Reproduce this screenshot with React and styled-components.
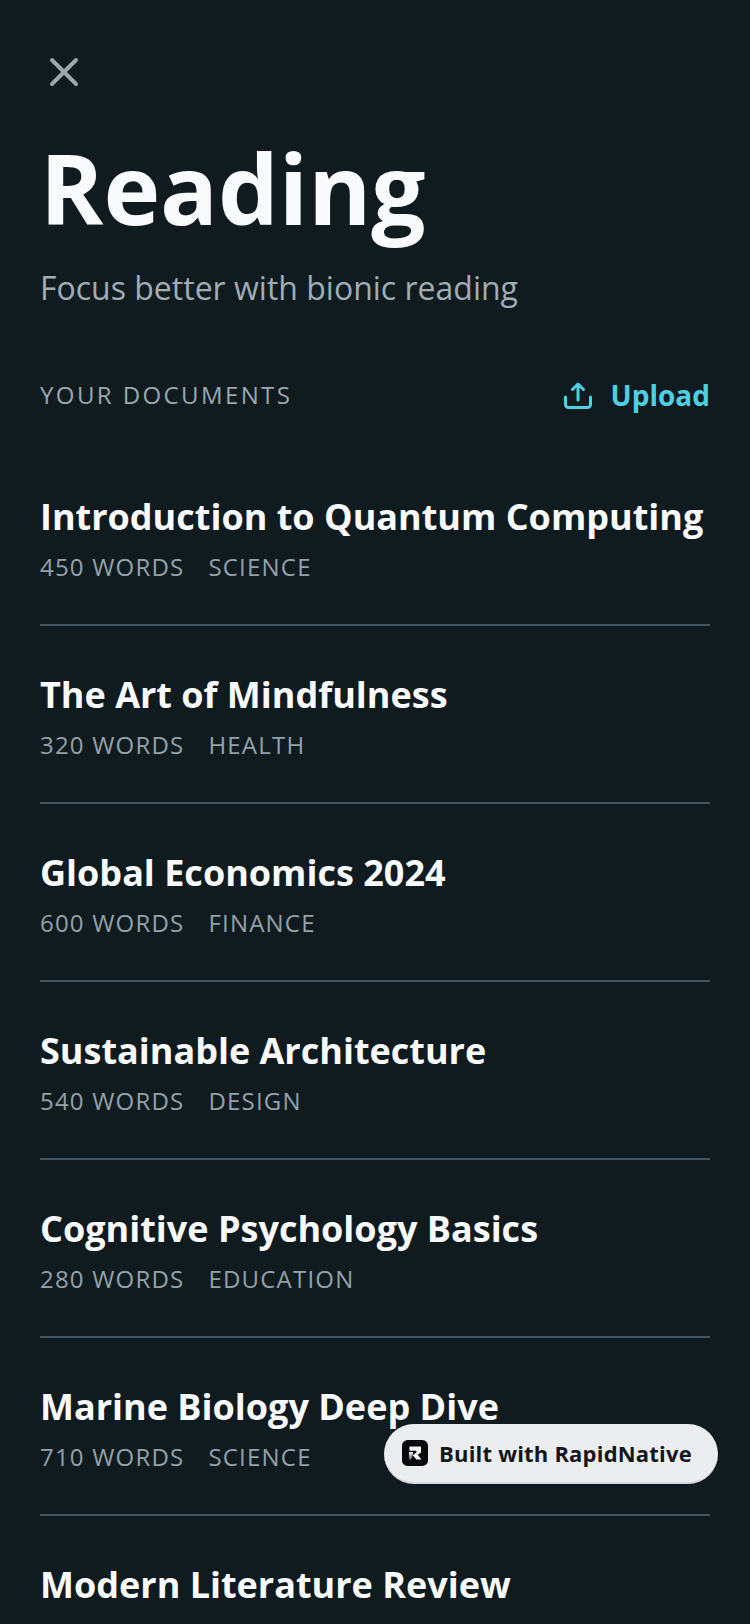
import React from 'react';
import styled, { createGlobalStyle } from 'styled-components';

const documents = [
  { title: 'Introduction to Quantum Computing', words: 450, tag: 'SCIENCE' },
  { title: 'The Art of Mindfulness', words: 320, tag: 'HEALTH' },
  { title: 'Global Economics 2024', words: 600, tag: 'FINANCE' },
  { title: 'Sustainable Architecture', words: 540, tag: 'DESIGN' },
  { title: 'Cognitive Psychology Basics', words: 280, tag: 'EDUCATION' },
  { title: 'Marine Biology Deep Dive', words: 710, tag: 'SCIENCE' },
  { title: 'Modern Literature Review' },
];

const App = () => (
  <Screen>
    <GlobalStyle />
    <CloseButton aria-label="Close">
      <svg width="40" height="40" viewBox="0 0 40 40" fill="none" stroke="#9aa7ae" strokeWidth="4" strokeLinecap="round">
        <path d="M8 8L32 32M32 8L8 32" />
      </svg>
    </CloseButton>
    <Heading>Reading</Heading>
    <Subtitle>Focus better with bionic reading</Subtitle>

    <SectionHeader>
      <SectionLabel>YOUR DOCUMENTS</SectionLabel>
      <UploadButton>
        <svg width="32" height="32" viewBox="0 0 32 32" fill="none" stroke="#4dd0e1" strokeWidth="3" strokeLinecap="round" strokeLinejoin="round">
          <path d="M15 21V5M9.500 10.500L15 5L20.500 10.500M2.500 18v7.500a3 3 0 0 0 3 3h19a3 3 0 0 0 3-3V18" />
        </svg>
        Upload
      </UploadButton>
    </SectionHeader>

    <List>
      {documents.map(doc => (
        <Row key={doc.title}>
          <RowTitle>{doc.title}</RowTitle>
          {doc.words && (
            <Meta>
              <span>{doc.words} WORDS</span>
              <span>{doc.tag}</span>
            </Meta>
          )}
        </Row>
      ))}
    </List>

    <Badge>
      <BadgeLogo>
        <svg width="26" height="26" viewBox="0 0 28 28">
          <defs>
            <linearGradient id="stem" x1="0" y1="0" x2="0" y2="1">
              <stop offset="0" stopColor="#f2f3f4" />
              <stop offset="1" stopColor="#5c5e62" />
            </linearGradient>
          </defs>
          <rect width="28" height="28" rx="6" fill="#0a0a0c" />
          <path d="M8 7H20.500V13.500L17 16L21 21H15.500L11.500 16.500L15.500 13.500V11.500H8Z" fill="#f2f3f4" />
          <path d="M7.500 13H12L11.500 16.500L10 21H7.500Z" fill="url(#stem)" />
        </svg>
      </BadgeLogo>
      <BadgeLabel>Built with RapidNative</BadgeLabel>
    </Badge>
  </Screen>
);

const GlobalStyle = createGlobalStyle`
  html, body {
    margin: 0;
    padding: 0;
    background: #101b20;
  }
`;

const Screen = styled.div`
  position: relative;
  box-sizing: border-box;
  width: 750px;
  height: 1624px;
  padding: 52px 40px 0;
  overflow: hidden;
  background: #101b20;
  font-family: 'Open Sans', sans-serif;
`;

const CloseButton = styled.div`
  display: flex;
  width: 48px;
  height: 40px;
  margin-left: 4px;
  margin-bottom: 34px;
`;

const Heading = styled.h1`
  margin: 0;
  font-size: 96px;
  line-height: 124px;
  font-weight: 700;
  color: #f8fafc;
`;

const Subtitle = styled.div`
  margin-top: 16px;
  font-size: 32px;
  line-height: 44px;
  color: #a0adb5;
`;

const SectionHeader = styled.div`
  display: flex;
  align-items: center;
  justify-content: space-between;
  margin-top: 65px;
`;

const SectionLabel = styled.div`
  font-size: 24px;
  line-height: 32px;
  letter-spacing: 2.4px;
  color: #9aa7ae;
`;

const UploadButton = styled.div`
  display: flex;
  align-items: center;
  gap: 16px;
  font-size: 28px;
  line-height: 40px;
  font-weight: 700;
  color: #4dd0e1;
`;

const List = styled.div`
  margin-top: 33px;
`;

const Row = styled.div`
  height: 178px;
  box-sizing: border-box;
  padding-top: 45px;
  border-bottom: 2px solid #46545c;
`;

const RowTitle = styled.div`
  font-size: 36px;
  line-height: 48px;
  font-weight: 700;
  color: #f8fafc;
`;

const Meta = styled.div`
  display: flex;
  gap: 24px;
  margin-top: 9px;
  font-size: 24px;
  line-height: 34px;
  letter-spacing: 1.2px;
  color: #94a1a9;
`;

const Badge = styled.div`
  position: absolute;
  left: 384px;
  top: 1424px;
  display: flex;
  align-items: center;
  gap: 11px;
  box-sizing: border-box;
  width: 334px;
  height: 60px;
  padding-left: 18px;
  border-radius: 30px;
  background: #ecedef;
  border-bottom: 2px solid #d6dadd;
`;

const BadgeLogo = styled.div`
  display: flex;
  width: 26px;
  height: 26px;
`;

const BadgeLabel = styled.span`
  font-size: 22px;
  font-weight: 700;
  letter-spacing: 0.2px;
  color: #14161a;
`;

export default App;
